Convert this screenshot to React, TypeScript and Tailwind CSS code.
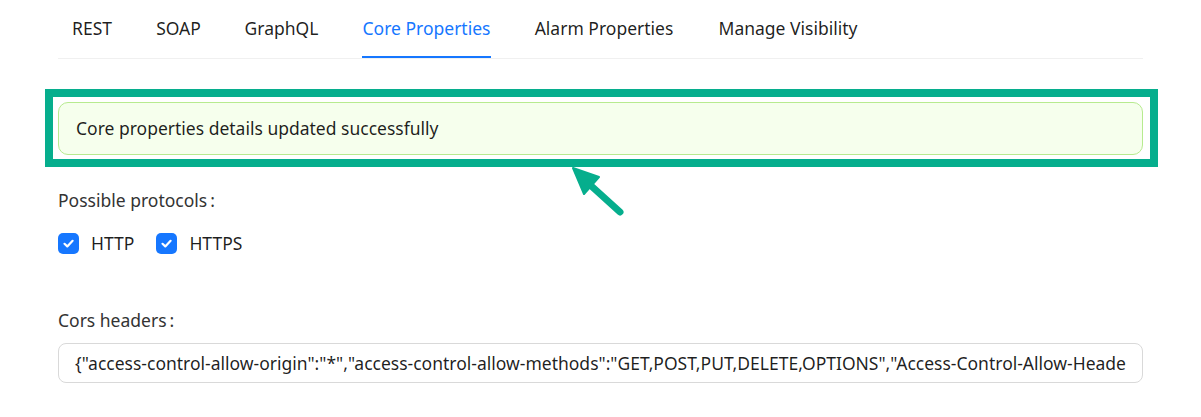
import React from "react";

const tabs = [
  { label: "REST", w: "w-[40px]", ml: "ml-0" },
  { label: "SOAP", w: "w-[47px]", ml: "ml-[43px]" },
  { label: "GraphQL", w: "w-[73px]", ml: "ml-[43px]" },
  { label: "Core Properties", w: "w-[129px]", ml: "ml-[44px]", active: true },
  { label: "Alarm Properties", w: "w-[138px]", ml: "ml-[44px]" },
  { label: "Manage Visibility", w: "w-[142px]", ml: "ml-[44px]" },
];

function Check() {
  return (
    <span className="flex h-[21px] w-[21px] items-center justify-center rounded-[5px] bg-[#1677ff]">
      <svg width="13" height="13" viewBox="0 0 13 13" fill="none">
        <path d="M2.5 6.8 L5.3 9.4 L10.6 3.8" stroke="white" strokeWidth="2.2" strokeLinecap="round" strokeLinejoin="round" />
      </svg>
    </span>
  );
}

export default function App() {
  const cors =
    '{"access-control-allow-origin":"*","access-control-allow-methods":"GET,POST,PUT,DELETE,OPTIONS","Access-Control-Allow-Headers":"Content-Type,Authorization,X-Requested-With"}';
  return (
    <div
      className="relative h-[417px] w-[1201px] overflow-hidden bg-white text-[17.5px] text-[rgba(0,0,0,0.88)]"
      style={{ fontFamily: '"Noto Sans", "Open Sans", sans-serif' }}
    >
      <div className="mx-[58px] flex h-[59px] border-b border-[#f0f0f0] pl-[14px]">
        {tabs.map((t) => (
          <div
            key={t.label}
            className={`relative flex items-center justify-center whitespace-nowrap pb-[2px] ${t.w} ${t.ml} ${
              t.active ? "text-[#1677ff]" : "text-[rgba(0,0,0,0.88)]"
            }`}
          >
            {t.label}
            {t.active && <span className="absolute bottom-0 left-0 right-0 h-[2px] bg-[#1677ff]" />}
          </div>
        ))}
      </div>

      <div className="px-[58px]">
        <div className="mt-[43px] flex h-[53px] items-center rounded-[10px] border border-[#b7eb8f] bg-[#f6ffed] pl-[17px]">
          Core properties details updated successfully
        </div>

        <div className="mt-[33px] flex h-[25px] items-center text-[#333]">
          Possible protocols<span className="ml-[3px]">:</span>
        </div>

        <div className="mt-[20px] flex h-[21px] items-center">
          <Check />
          <span className="ml-[12px]">HTTP</span>
          <span className="ml-[22px]">
            <Check />
          </span>
          <span className="ml-[12px]">HTTPS</span>
        </div>

        <div className="mt-[54px] flex h-[25px] items-center text-[#333]">
          Cors headers<span className="ml-[3px]">:</span>
        </div>

        <input
          readOnly
          value={cors}
          className="mt-[10px] block h-[40px] w-full rounded-[8px] border border-[#d9d9d9] bg-white px-[16px] text-[17.5px] text-[rgba(0,0,0,0.88)] outline-none"
          style={{ fontFamily: '"Noto Sans", "Open Sans", sans-serif' }}
        />
      </div>

      <div className="pointer-events-none absolute left-[45px] top-[89px] h-[78px] w-[1113px] border-[8px] border-[#06ae8d]" />

      <svg className="pointer-events-none absolute left-[560px] top-[160px]" width="80" height="60" viewBox="560 160 80 60">
        <path d="M573 168 L584 194 L599 177 Z" fill="#06ae8d" stroke="#06ae8d" strokeWidth="2" strokeLinejoin="round" />
        <path d="M588 183 L620 212" stroke="#06ae8d" strokeWidth="7" strokeLinecap="round" />
      </svg>
    </div>
  );
}
